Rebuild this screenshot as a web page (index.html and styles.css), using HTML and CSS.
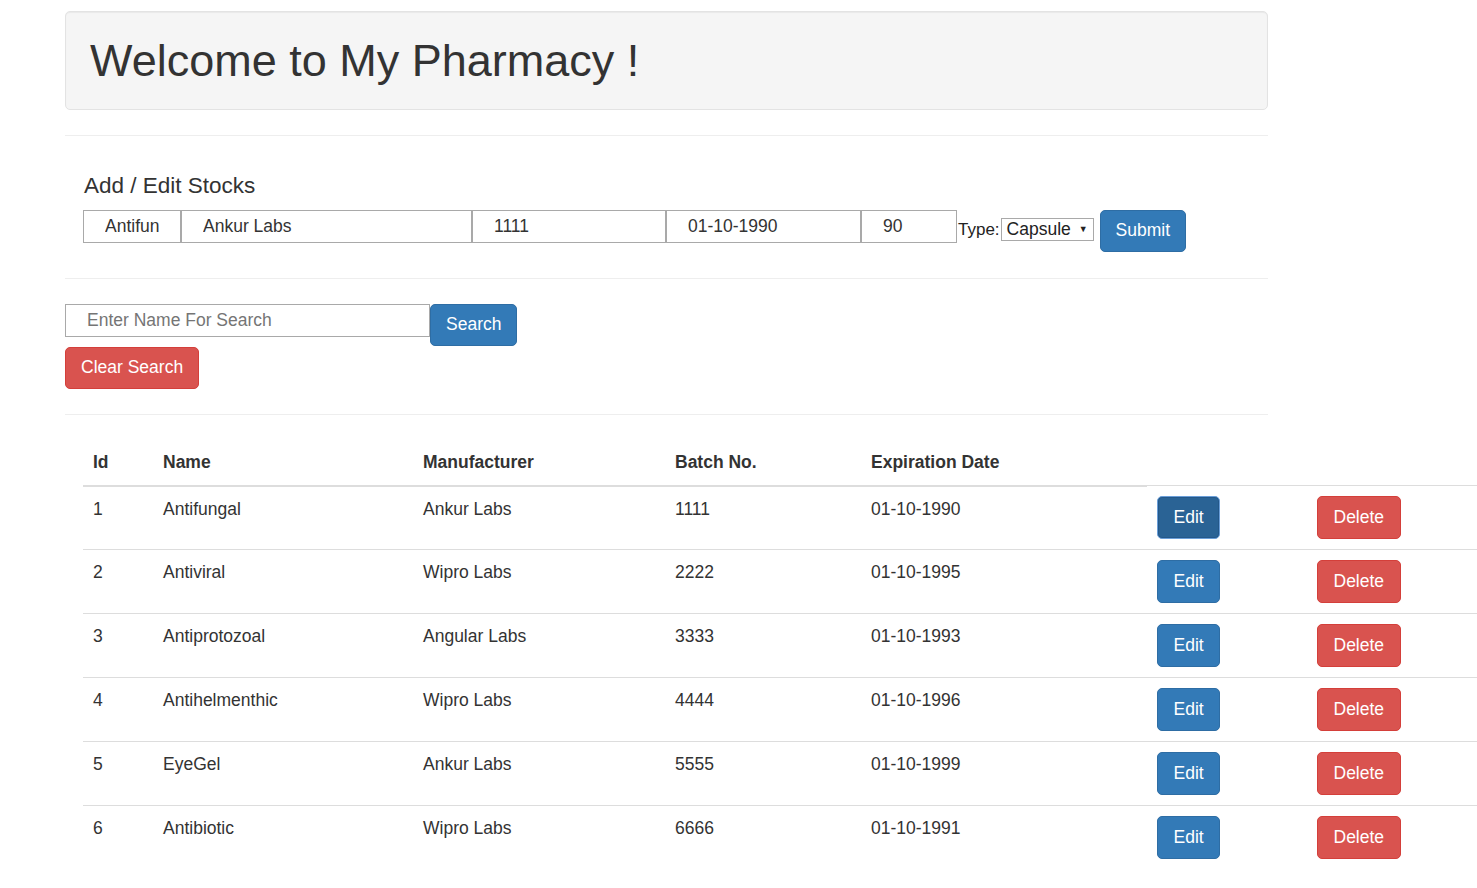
FILE: index.html
```html
<!DOCTYPE html>
<html>
<head>
<meta charset="utf-8">
<title>My Pharmacy</title>
<link rel="stylesheet" href="styles.css">
</head>
<body>
<div class="page">
  <div class="well">
    <h1 class="title">Welcome to My Pharmacy !</h1>
  </div>
  <div class="rule"></div>
  <div class="stock-form">
    <h4 class="form-title">Add / Edit Stocks</h4>
    <div class="form-row">
      <input class="field f-name" type="text" value="Antifun"><input class="field f-manu" type="text" value="Ankur Labs"><input class="field f-batch" type="text" value="1111"><input class="field f-date" type="text" value="01-10-1990"><input class="field f-qty" type="text" value="90">
      <span class="type-label">Type:</span>
      <span class="select"><span class="select-text">Capsule</span><span class="select-arrow">▼</span></span>
      <button class="btn btn-primary submit">Submit</button>
    </div>
  </div>
  <div class="rule"></div>
  <div class="search-row">
    <input class="field f-search" type="text" placeholder="Enter Name For Search"><button class="btn btn-primary">Search</button>
  </div>
  <div class="clear-row">
    <button class="btn btn-danger">Clear Search</button>
  </div>
  <div class="rule"></div>
  <table class="stock-table">
    <colgroup>
      <col class="c-id"><col class="c-name"><col class="c-manu"><col class="c-batch"><col class="c-date"><col class="c-edit"><col class="c-del">
    </colgroup>
    <thead>
      <tr><th>Id</th><th>Name</th><th>Manufacturer</th><th>Batch No.</th><th>Expiration Date</th></tr>
    </thead>
    <tbody>
      <tr><td>1</td><td>Antifungal</td><td>Ankur Labs</td><td>1111</td><td>01-10-1990</td><td><button class="btn btn-primary btn-row active-edit">Edit</button></td><td><button class="btn btn-danger btn-row">Delete</button></td></tr>
      <tr><td>2</td><td>Antiviral</td><td>Wipro Labs</td><td>2222</td><td>01-10-1995</td><td><button class="btn btn-primary btn-row">Edit</button></td><td><button class="btn btn-danger btn-row">Delete</button></td></tr>
      <tr><td>3</td><td>Antiprotozoal</td><td>Angular Labs</td><td>3333</td><td>01-10-1993</td><td><button class="btn btn-primary btn-row">Edit</button></td><td><button class="btn btn-danger btn-row">Delete</button></td></tr>
      <tr><td>4</td><td>Antihelmenthic</td><td>Wipro Labs</td><td>4444</td><td>01-10-1996</td><td><button class="btn btn-primary btn-row">Edit</button></td><td><button class="btn btn-danger btn-row">Delete</button></td></tr>
      <tr><td>5</td><td>EyeGel</td><td>Ankur Labs</td><td>5555</td><td>01-10-1999</td><td><button class="btn btn-primary btn-row">Edit</button></td><td><button class="btn btn-danger btn-row">Delete</button></td></tr>
      <tr><td>6</td><td>Antibiotic</td><td>Wipro Labs</td><td>6666</td><td>01-10-1991</td><td><button class="btn btn-primary btn-row">Edit</button></td><td><button class="btn btn-danger btn-row">Delete</button></td></tr>
    </tbody>
  </table>
</div>
</body>
</html>
```
FILE: styles.css
```css
html, body {
  margin: 0;
  padding: 0;
  overflow: hidden;
  background: #fff;
}
body {
  font-family: "Liberation Sans", Arial, sans-serif;
  font-size: 17.5px;
  line-height: 1.42857;
  color: #333;
}
.page {
  padding: 11px 0 0 65px;
  width: 1203px;
}
.well {
  background: #f5f5f5;
  border: 1px solid #e3e3e3;
  border-radius: 5px;
  box-shadow: inset 0 1px 1px rgba(0,0,0,0.05);
  padding: 24px;
}
.title {
  margin: 0;
  font-size: 45px;
  font-weight: 500;
  line-height: 49px;
  color: #333;
}
.rule {
  border-top: 1px solid #eee;
  margin: 25px 0;
}
.stock-form {
  display: flow-root;
  padding: 0 0 1px 18px;
}
.form-title {
  margin: 12.5px 0 11.5px 1px;
  font-size: 22.5px;
  font-weight: 500;
  line-height: 1.1;
}
.form-row {
  display: flex;
  align-items: flex-start;
}
.field {
  box-sizing: border-box;
  height: 33px;
  margin: 0;
  padding: 0 4px 0 21px;
  border: 1px solid #a9a9a9;
  font-family: "Liberation Sans", Arial, sans-serif;
  font-size: 17.5px;
  color: #333;
  background: #fff;
  outline: none;
}
.field::placeholder {
  color: #757575;
}
.f-name { width: 98px; }
.f-manu { width: 291px; }
.f-batch { width: 194px; }
.f-date { width: 195px; }
.f-qty { width: 96px; }
.f-search { width: 365px; }
.type-label {
  margin: 8px 1px 0 1px;
  line-height: 23px;
  font-size: 17px;
  color: #222;
}
.select {
  box-sizing: border-box;
  margin-top: 8px;
  height: 23px;
  width: 93px;
  display: inline-flex;
  align-items: center;
  border: 1px solid #a9a9a9;
  padding: 0 0 0 5px;
  background: #fff;
  color: #222;
}
.select-text {
  line-height: 21px;
}
.select-arrow {
  font-size: 9px;
  margin-left: 8px;
  color: #222;
}
.btn {
  display: inline-block;
  box-sizing: border-box;
  margin: 0;
  padding: 7.5px 15px;
  border: 1px solid transparent;
  border-radius: 5px;
  font-family: "Liberation Sans", Arial, sans-serif;
  font-size: 17.5px;
  line-height: 25px;
  color: #fff;
  cursor: pointer;
}
.btn-row {
  padding: 8px 15.5px;
}
.submit {
  margin-left: 6px;
}
.btn-primary {
  background: #337ab7;
  border-color: #2e6da4;
}
.btn-danger {
  background: #d9534f;
  border-color: #d43f3a;
}
.active-edit {
  background: #2a6395;
  border-color: #6a9ed8;
  box-shadow: inset 0 0 0 1px #24588a;
}
.search-row {
  display: flex;
  align-items: flex-start;
}
.clear-row {
  margin-top: 1px;
}
.stock-table {
  margin-left: 18px;
  width: 1394px;
  table-layout: fixed;
  border-collapse: collapse;
  border-spacing: 0;
}
.c-id { width: 70px; }
.c-name { width: 260px; }
.c-manu { width: 252px; }
.c-batch { width: 196px; }
.c-date { width: 286px; }
.c-edit { width: 160px; }
.c-del { width: 170px; }
.stock-table th {
  text-align: left;
  font-weight: bold;
  vertical-align: bottom;
  padding: 10px;
  border-bottom: 2px solid #ddd;
}
.stock-table td {
  padding: 10px;
  vertical-align: top;
  border-top: 1px solid #ddd;
}
```
